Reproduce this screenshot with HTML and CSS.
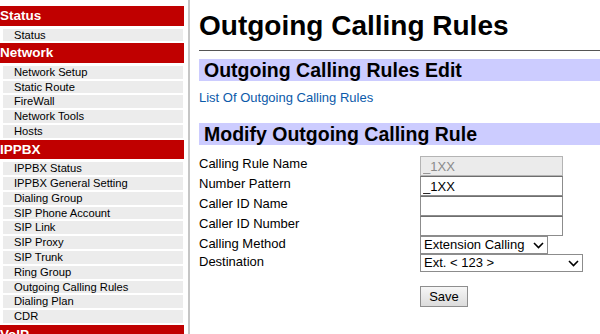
FILE: index.html
```html
<!DOCTYPE html>
<html>
  <head>
    <title>Outgoing Calling Rules</title>
    <meta name="viewport" content="width=device-width, initial-scale=1.0" />
    <link rel="stylesheet" href="styles.css">
  </head>
  <body>
    <div class="page">
      <div class="side-frame">
        <div class="menu">
          <div class="menu-group">
            <div class="menu-title">Status</div>
            <ul class="menu-list">
              <li>Status</li>
            </ul>
          </div>
          <div class="menu-group">
            <div class="menu-title">Network</div>
            <ul class="menu-list">
              <li>Network Setup</li>
              <li>Static Route</li>
              <li>FireWall</li>
              <li>Network Tools</li>
              <li>Hosts</li>
            </ul>
          </div>
          <div class="menu-group">
            <div class="menu-title">IPPBX</div>
            <ul class="menu-list">
              <li>IPPBX Status</li>
              <li>IPPBX General Setting</li>
              <li>Dialing Group</li>
              <li>SIP Phone Account</li>
              <li>SIP Link</li>
              <li>SIP Proxy</li>
              <li>SIP Trunk</li>
              <li>Ring Group</li>
              <li>Outgoing Calling Rules</li>
              <li>Dialing Plan</li>
              <li>CDR</li>
            </ul>
          </div>
          <div class="menu-group">
            <div class="menu-title">VoIP</div>
          </div>
        </div>
      </div>

      <div class="content">
        <h1>Outgoing Calling Rules</h1>
        <hr class="title-rule" />

        <h2 class="section-bar">Outgoing Calling Rules Edit</h2>
        <a class="list-link" href="#">List Of Outgoing Calling Rules</a>

        <h2 class="section-bar second">Modify Outgoing Calling Rule</h2>
        <div class="rule-form">
          <label>Calling Rule Name</label>
          <input type="text" class="field" value="_1XX" disabled />

          <label>Number Pattern</label>
          <input type="text" class="field" value="_1XX" />

          <label>Caller ID Name</label>
          <input type="text" class="field" value="" />

          <label>Caller ID Number</label>
          <input type="text" class="field" value="" />

          <label>Calling Method</label>
          <span class="select-wrap method">
            <select class="choice">
              <option>Extension Calling</option>
            </select>
            <svg class="chevron" width="11" height="7" viewBox="0 0 11 7">
              <path d="M1 1 L5.5 5.5 L10 1" fill="none" stroke="#000" stroke-width="1.6" />
            </svg>
          </span>

          <label>Destination</label>
          <span class="select-wrap dest">
            <select class="choice">
              <option>Ext. &lt; 123 &gt;</option>
            </select>
            <svg class="chevron" width="11" height="7" viewBox="0 0 11 7">
              <path d="M1 1 L5.5 5.5 L10 1" fill="none" stroke="#000" stroke-width="1.6" />
            </svg>
          </span>
        </div>

        <div class="form-actions">
          <button class="save-button">Save</button>
        </div>
      </div>
    </div>
  </body>
</html>
```

FILE: styles.css
```css
body {
  font-family: "Liberation Sans", Arial, sans-serif;
  background-color: #fff;
  margin: 0;
  padding: 0;
  height: 334px;
  overflow: hidden;
}

.page {
  display: flex;
  width: 600px;
  height: 334px;
  overflow: hidden;
}

/* Left menu */
.side-frame {
  flex: 0 0 184px;
  padding: 6px 4px 0 0;
  border-right: 2px solid #c6c6c6;
}

.menu-group {
  margin-bottom: 0.5px;
}

.menu-title {
  height: 19.5px;
  line-height: 19.5px;
  background-color: #c00000;
  color: #fff;
  font-size: 13.5px;
  font-weight: bold;
  margin-bottom: 3px;
}

.menu-list {
  list-style: none;
  margin: 0;
  padding: 0;
}

.menu-list li {
  height: 12.8px;
  line-height: 12px;
  margin: 0 1px 2px 3px;
  padding-left: 11px;
  background-color: #ececec;
  font-size: 11.2px;
  color: #000;
  white-space: nowrap;
}

/* Main area */
.content {
  flex: 0 0 440px;
  padding: 10px 0 0 9px;
}

h1 {
  font-size: 28px;
  line-height: 32px;
  font-weight: bold;
  color: #000;
  margin: 0;
}

.title-rule {
  border: none;
  border-top: 1px solid #555;
  margin: 8px 0 0 0;
}

.section-bar {
  background-color: #ccccff;
  font-size: 19.5px;
  line-height: 22px;
  height: 22px;
  font-weight: bold;
  color: #000;
  margin: 8px 0 0 0;
  padding-left: 5px;
}

.section-bar.second {
  margin-top: 18px;
}

.list-link {
  display: block;
  margin-top: 9px;
  font-size: 13px;
  line-height: 15px;
  color: #0b5aaa;
  text-decoration: none;
}

.rule-form {
  display: grid;
  grid-template-columns: 221px auto;
  align-items: start;
  justify-items: start;
  margin-top: 11px;
  font-size: 13px;
}

.rule-form label {
  color: #000;
  line-height: 15px;
}

.field {
  box-sizing: border-box;
  width: 143px;
  height: 20px;
  margin: 0;
  padding: 0 2px;
  border: 1px solid #8c8c8c;
  border-top-color: #6e6e6e;
  font-family: inherit;
  font-size: 13px;
  color: #000;
  background-color: #fff;
}

.field:disabled {
  background-color: #ebebeb;
  color: #8a8a8a;
  border-color: #b4b4b4;
}

.select-wrap {
  position: relative;
  display: block;
  height: 18px;
}

.choice {
  appearance: none;
  -webkit-appearance: none;
  box-sizing: border-box;
  height: 18px;
  margin: 0;
  padding: 0 0 0 3px;
  border: 1px solid #8c8c8c;
  border-radius: 0;
  background-color: #fff;
  font-family: inherit;
  font-size: 13px;
  line-height: 16px;
  color: #000;
  vertical-align: top;
}

.method .choice {
  width: 128px;
}

.dest .choice {
  width: 163px;
}

.chevron {
  position: absolute;
  right: 4px;
  top: 6px;
  pointer-events: none;
}

.form-actions {
  margin: 14px 0 0 221px;
}

.save-button {
  box-sizing: border-box;
  width: 48px;
  height: 21px;
  padding: 0;
  font-family: inherit;
  font-size: 13px;
  color: #000;
  border: 1px solid #8e8e8e;
  border-radius: 0;
  background: linear-gradient(#f6f6f6, #dcdcdc);
}
```
